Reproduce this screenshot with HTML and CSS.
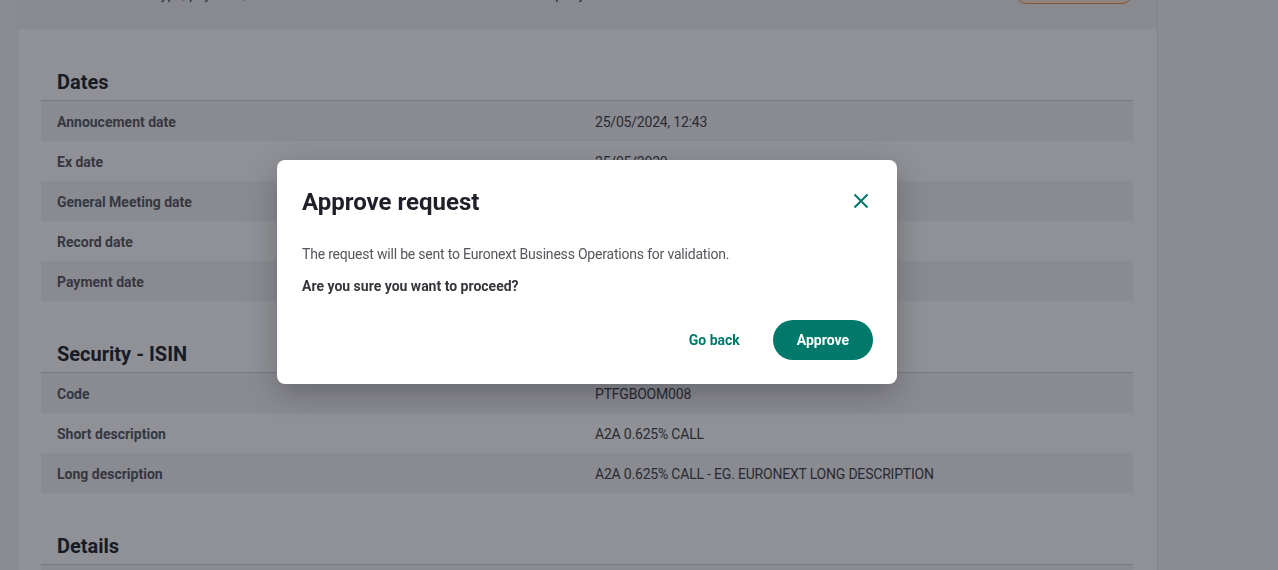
FILE: index.html
```html
<!DOCTYPE html>
<html lang="en">

<head>
  <meta charset="UTF-8" />
  <meta name="viewport" content="width=device-width, initial-scale=1.0" />
  <title>Corporate action - Approve request</title>
  <link rel="stylesheet" href="styles.css">
</head>

<body>
  <div class="panel">
    <div class="panel-header">
      <p class="panel-subtitle">Cash dividend · type, payment, ISIN PTFGBOOM008 · Euronext Lisbon · A2A company</p>
      <button class="btn-outline" type="button">Reject</button>
    </div>

    <div class="panel-body">
      <section class="section">
        <h3 class="section-title">Dates</h3>
        <div class="row"><span class="label">Annoucement date</span><span class="value">25/05/2024, 12:43</span></div>
        <div class="row"><span class="label">Ex date</span><span class="value">25/05/2020</span></div>
        <div class="row"><span class="label">General Meeting date</span><span class="value">20/05/2020</span></div>
        <div class="row"><span class="label">Record date</span><span class="value">26/05/2020</span></div>
        <div class="row"><span class="label">Payment date</span><span class="value">28/05/2020</span></div>
      </section>

      <section class="section">
        <h3 class="section-title">Security - ISIN</h3>
        <div class="row"><span class="label">Code</span><span class="value">PTFGBOOM008</span></div>
        <div class="row"><span class="label">Short description</span><span class="value">A2A 0.625% CALL</span></div>
        <div class="row"><span class="label">Long description</span><span class="value">A2A 0.625% CALL - EG. EURONEXT LONG DESCRIPTION</span></div>
      </section>

      <section class="section">
        <h3 class="section-title">Details</h3>
        <div class="row"><span class="label">Type</span><span class="value">Cash dividend</span></div>
      </section>
    </div>
  </div>

  <!-- Approve confirmation -->
  <div class="overlay">
    <div class="modal" role="dialog" aria-labelledby="modalTitle">
      <div class="modal-header">
        <h2 id="modalTitle">Approve request</h2>
        <button class="modal-close" type="button" aria-label="Close">
          <svg width="16" height="16" viewBox="0 0 16 16" fill="none" stroke="currentColor" stroke-width="2">
            <path d="M1.5 1.5l13 13M14.5 1.5l-13 13" />
          </svg>
        </button>
      </div>

      <p class="modal-text">The request will be sent to Euronext Business Operations for validation.</p>
      <p class="modal-question">Are you sure you want to proceed?</p>

      <div class="modal-actions">
        <button class="btn-link" type="button">Go back</button>
        <button class="btn-primary" type="button">Approve</button>
      </div>
    </div>
  </div>
</body>

</html>
```

FILE: styles.css
```css
:root {
  --teal: #00786a;
  --orange: #f08a3c;
  --text-dark: #1e1f28;
  --text: #3c3d45;
  --text-muted: #55565e;
  --line: #d2d3d8;
  --stripe: #f4f4f6;
  --white: #ffffff;
}

* {
  margin: 0;
  padding: 0;
  box-sizing: border-box;
  font-family: Roboto, "Liberation Sans", sans-serif;
}

body {
  background-color: #f7f7f9;
  min-height: 100vh;
  overflow: hidden;
}

button {
  border: none;
  background: none;
  cursor: pointer;
}

.panel {
  width: 1141px;
  margin-left: 17px;
  margin-top: -51px;
  border-left: 1px solid #e6e6ea;
  border-right: 1px solid #e6e6ea;
}

.panel-header {
  height: 80px;
  display: flex;
  align-items: flex-end;
  justify-content: space-between;
  padding: 0 25px 25px 40px;
  background-color: #f1f1f4;
}

.panel-subtitle {
  color: var(--text);
  font-size: 14px;
  line-height: 18px;
  margin-bottom: 1px;
}

.btn-outline {
  width: 116px;
  height: 36px;
  border: 1px solid var(--orange);
  border-radius: 10px;
  background-color: #fde6d4;
  color: #b45a1c;
  font-size: 14px;
  font-weight: 700;
}

.panel-body {
  background: var(--white);
  padding: 39px 24px 40px 23px;
}

.section + .section {
  margin-top: 39px;
}

.section-title {
  color: var(--text-dark);
  font-size: 20px;
  font-weight: 700;
  line-height: 28px;
  padding: 0 16px 4px;
  border-bottom: 1px solid var(--line);
}

.row {
  display: grid;
  grid-template-columns: 538px 1fr;
  align-items: center;
  height: 40px;
  padding: 2px 16px 0;
  font-size: 14px;
}

.row:nth-of-type(odd) {
  background-color: var(--stripe);
}

.label {
  color: var(--text-muted);
  font-weight: 700;
}

.value {
  color: var(--text);
  letter-spacing: -0.2px;
}

/* Modal */
.overlay {
  position: fixed;
  inset: 0;
  display: flex;
  justify-content: center;
  align-items: flex-start;
  padding: 160px 104px 0 0;
  background-color: rgba(20, 22, 32, 0.47);
}

.modal {
  width: 620px;
  background: var(--white);
  border-radius: 8px;
  padding: 25px 24px 24px 25px;
  box-shadow: 0 10px 30px rgba(0, 0, 0, 0.25);
}

.modal-header {
  display: flex;
  align-items: center;
  justify-content: space-between;
}

.modal-header h2 {
  color: var(--text-dark);
  font-size: 24px;
  font-weight: 700;
  line-height: 32px;
  padding-top: 1px;
}

.modal-close {
  width: 24px;
  height: 24px;
  display: grid;
  place-items: center;
  margin-top: -1px;
  color: var(--teal);
}

.modal-text {
  margin-top: 26px;
  color: #55565c;
  font-size: 14px;
  line-height: 20px;
  letter-spacing: -0.2px;
}

.modal-question {
  margin-top: 12px;
  color: #35363c;
  font-size: 14px;
  font-weight: 700;
  line-height: 20px;
}

.modal-actions {
  display: flex;
  justify-content: flex-end;
  gap: 17px;
  margin-top: 24px;
}

.btn-link {
  height: 40px;
  padding: 0 16px;
  color: var(--teal);
  font-size: 14px;
  font-weight: 700;
}

.btn-primary {
  height: 40px;
  padding: 0 24px;
  border-radius: 20px;
  background-color: var(--teal);
  color: var(--white);
  font-size: 14px;
  font-weight: 700;
}
```
